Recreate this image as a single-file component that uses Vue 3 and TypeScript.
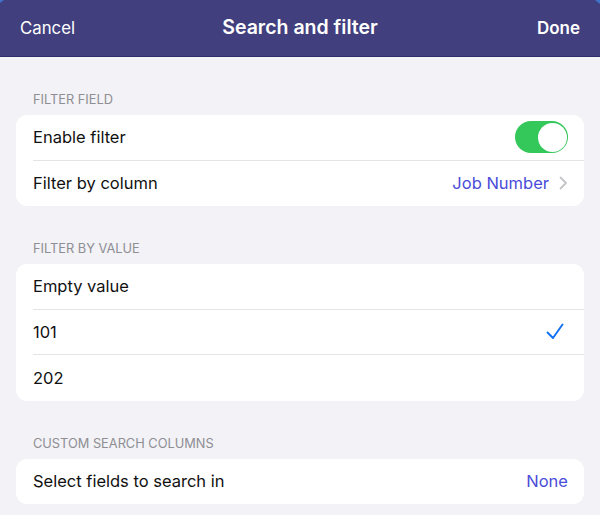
<script setup lang="ts">
const values = [
  { label: 'Empty value', checked: false },
  { label: '101', checked: true },
  { label: '202', checked: false },
]
</script>

<template>
  <div class="sheet">
    <div class="corner corner-left"></div>
    <div class="corner corner-right"></div>
    <header class="nav">
      <span class="nav-btn">Cancel</span>
      <span class="nav-title">Search and filter</span>
      <span class="nav-btn done">Done</span>
    </header>

    <main class="content">
      <section class="group">
        <div class="group-title">FILTER FIELD</div>
        <div class="card">
          <div class="row">
            <span>Enable filter</span>
            <span class="switch"><span class="knob"></span></span>
          </div>
          <div class="row">
            <span>Filter by column</span>
            <span class="detail">
              <span class="link">Job Number</span>
              <svg class="chevron" width="9" height="14" viewBox="0 0 9 14">
                <path d="M1.500 1.500L7 7l-5.500 5.500" fill="none" stroke="#c4c4c7" stroke-width="1.800" stroke-linecap="round" stroke-linejoin="round" />
              </svg>
            </span>
          </div>
        </div>
      </section>

      <section class="group">
        <div class="group-title">FILTER BY VALUE</div>
        <div class="card">
          <div class="row" v-for="item in values" :key="item.label">
            <span>{{ item.label }}</span>
            <svg v-if="item.checked" class="check" width="18" height="17" viewBox="0 0 18 17">
              <path d="M1.500 9.500L7 15l9.500-13.500" fill="none" stroke="#0f6ff5" stroke-width="1.900" stroke-linecap="round" stroke-linejoin="round" />
            </svg>
          </div>
        </div>
      </section>

      <section class="group">
        <div class="group-title">CUSTOM SEARCH COLUMNS</div>
        <div class="card">
          <div class="row">
            <span>Select fields to search in</span>
            <span class="link">None</span>
          </div>
        </div>
      </section>
    </main>
  </div>
</template>

<style>
body {
  background: #f2f2f7;
}
</style>

<style scoped>
.sheet {
  position: relative;
  width: 600px;
  height: 515px;
  overflow: hidden;
  background: #f2f2f7;
  font-family: Inter, "Liberation Sans", sans-serif;
  color: #111;
}

.corner {
  position: absolute;
  top: 0;
  background: #3f72c8;
}

.corner-left {
  left: 0;
  width: 4px;
  height: 3px;
  clip-path: polygon(0 0, 100% 0, 0 100%);
}

.corner-right {
  right: 0;
  width: 5px;
  height: 4px;
  clip-path: polygon(0 0, 100% 0, 100% 100%);
}

.nav {
  height: 57px;
  box-sizing: border-box;
  padding: 0 20px 1px;
  background: #413f7e;
  border-bottom: 1px solid #2f2d70;
  color: #fff;
  display: grid;
  grid-template-columns: 1fr auto 1fr;
  align-items: center;
}

.nav-btn {
  font-size: 16.800px;
}

.done {
  font-size: 17px;
  font-weight: 600;
  text-align: right;
}

.nav-title {
  font-size: 19.500px;
  font-weight: 600;
  line-height: 24px;
  margin-bottom: 1px;
}

.content {
  padding: 34px 16px 0;
  display: flex;
  flex-direction: column;
  gap: 34px;
}

.group-title {
  padding-left: 17px;
  height: 24px;
  font-size: 12.800px;
  line-height: 18px;
  color: #8e8e93;
}

.card {
  background: #fff;
  border-radius: 11px;
  overflow: hidden;
}

.row {
  height: 45.500px;
  margin-left: 17px;
  padding-right: 16px;
  box-sizing: border-box;
  display: flex;
  align-items: center;
  justify-content: space-between;
  font-size: 16.500px;
  border-bottom: 1px solid #e4e4e7;
}

.row:last-child {
  border-bottom: none;
}

.detail {
  display: flex;
  align-items: center;
  gap: 10px;
}

.link {
  color: #4a4cd9;
}

.switch {
  width: 53px;
  height: 32px;
  box-sizing: border-box;
  border-radius: 16px;
  background: #34c759;
  display: flex;
  align-items: center;
  justify-content: flex-end;
  padding-right: 1px;
}

.knob {
  width: 29px;
  height: 29px;
  border-radius: 50%;
  background: #fff;
}

.check {
  margin-right: 4px;
}
</style>
